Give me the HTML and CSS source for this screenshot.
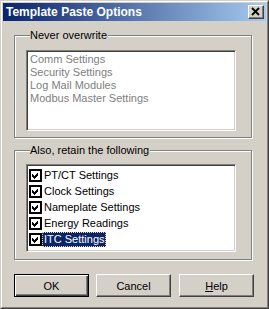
FILE: index.html
```html
<!DOCTYPE html>
<html lang="en">
<head>
    <meta charset="UTF-8">
    <title>Template Paste Options</title>
    <link rel="stylesheet" href="styles.css">
</head>
<body>

    <div class="window">
        <div class="frame">
            <div class="title-bar">
                <span class="title">Template Paste Options</span>
                <div class="close-btn">
                    <svg width="14" height="12" viewBox="0 0 14 12">
                        <path d="M3 2 L10 9 M10 2 L3 9" stroke="#000" stroke-width="1.8"/>
                    </svg>
                </div>
            </div>

            <div class="dialog">
                <fieldset class="group">
                    <legend>Never overwrite</legend>
                    <div class="listbox plain">
                        <div class="item disabled">Comm Settings</div>
                        <div class="item disabled">Security Settings</div>
                        <div class="item disabled">Log Mail Modules</div>
                        <div class="item disabled">Modbus Master Settings</div>
                    </div>
                </fieldset>

                <fieldset class="group second">
                    <legend>Also, retain the following</legend>
                    <div class="listbox checks">
                        <div class="check-item">
                            <svg class="checkbox" width="13" height="13" viewBox="0 0 13 13"><rect x="1" y="1" width="11" height="11" fill="#fff" stroke="#000" stroke-width="2"/><polygon points="3,5 5,7 9,3 9,6 5,10 3,8" fill="#000"/></svg>
                            <span class="label">PT/CT Settings</span>
                        </div>
                        <div class="check-item">
                            <svg class="checkbox" width="13" height="13" viewBox="0 0 13 13"><rect x="1" y="1" width="11" height="11" fill="#fff" stroke="#000" stroke-width="2"/><polygon points="3,5 5,7 9,3 9,6 5,10 3,8" fill="#000"/></svg>
                            <span class="label">Clock Settings</span>
                        </div>
                        <div class="check-item">
                            <svg class="checkbox" width="13" height="13" viewBox="0 0 13 13"><rect x="1" y="1" width="11" height="11" fill="#fff" stroke="#000" stroke-width="2"/><polygon points="3,5 5,7 9,3 9,6 5,10 3,8" fill="#000"/></svg>
                            <span class="label">Nameplate Settings</span>
                        </div>
                        <div class="check-item">
                            <svg class="checkbox" width="13" height="13" viewBox="0 0 13 13"><rect x="1" y="1" width="11" height="11" fill="#fff" stroke="#000" stroke-width="2"/><polygon points="3,5 5,7 9,3 9,6 5,10 3,8" fill="#000"/></svg>
                            <span class="label">Energy Readings</span>
                        </div>
                        <div class="check-item">
                            <svg class="checkbox" width="13" height="13" viewBox="0 0 13 13"><rect x="1" y="1" width="11" height="11" fill="#fff" stroke="#000" stroke-width="2"/><polygon points="3,5 5,7 9,3 9,6 5,10 3,8" fill="#000"/></svg>
                            <span class="label selected">ITC Settings</span>
                        </div>
                    </div>
                </fieldset>

                <div class="buttons">
                    <button class="btn default">OK</button>
                    <button class="btn">Cancel</button>
                    <button class="btn"><u>H</u>elp</button>
                </div>
            </div>
        </div>
    </div>

</body>
</html>
```

FILE: styles.css
```css
body {
    margin: 0;
    font-family: 'Liberation Sans', Arial, sans-serif;
    font-size: 11px;
    background: #d4d0c8;
}

.window {
    width: 269px;
    height: 309px;
    box-sizing: border-box;
    border: 1px solid;
    border-color: #d4d0c8 #404040 #404040 #d4d0c8;
}

.frame {
    height: 100%;
    box-sizing: border-box;
    border: 1px solid;
    border-color: #fff #808080 #808080 #fff;
    padding: 1px;
    background: #d4d0c8;
    display: flex;
    flex-direction: column;
}

.title-bar {
    height: 18px;
    display: flex;
    align-items: center;
    justify-content: space-between;
    padding: 0 2px 0 3px;
    background: linear-gradient(to right, #0a246a, #a6caf0);
}

.title {
    color: #fff;
    font-weight: bold;
    font-size: 12px;
}

.close-btn {
    width: 16px;
    height: 14px;
    box-sizing: border-box;
    border: 1px solid;
    border-color: #fff #404040 #404040 #fff;
    box-shadow: inset -1px -1px 0 #808080;
    background: #d4d0c8;
    display: flex;
}

.dialog {
    padding: 8px 0 0 11px;
}

.group {
    width: 238px;
    box-sizing: border-box;
    margin: 0;
    padding: 8px 0 6px 11px;
    border: 1px solid #808080;
    box-shadow: inset 1px 1px 0 #fff, 1px 1px 0 #fff;
    min-inline-size: 0;
}

.group legend {
    padding: 0 1px 0 0;
    margin-left: 4px;
    line-height: 13px;
    background: #d4d0c8;
    color: #000;
}

.group.second {
    margin-top: 6px;
    padding-top: 7px;
    padding-bottom: 7px;
}

.listbox {
    width: 210px;
    box-sizing: border-box;
    background: #fff;
    border: 1px solid;
    border-color: #808080 #fff #fff #808080;
    box-shadow: inset 1px 1px 0 #404040, inset -1px -1px 0 #d4d0c8;
    padding: 1px;
}

.listbox.plain {
    height: 81px;
    padding-top: 2px;
}

.listbox.checks {
    height: 88px;
    padding-top: 2px;
}

.item {
    line-height: 13px;
    padding-left: 2px;
}

.item.disabled {
    color: #808080;
}

.check-item {
    height: 16px;
    display: flex;
    align-items: center;
}

.checkbox {
    margin-left: 1px;
    shape-rendering: crispEdges;
}

.label {
    height: 15px;
    line-height: 15px;
    padding: 0 1px 0 2px;
    color: #000;
}

.label.selected {
    background: #0a246a;
    color: #fff;
    outline: 1px dotted #f5db95;
    outline-offset: -1px;
}

.buttons {
    display: flex;
    gap: 7px;
    margin-top: 14px;
}

.btn {
    width: 75px;
    height: 23px;
    box-sizing: border-box;
    font-family: 'Liberation Sans', Arial, sans-serif;
    font-size: 11px;
    color: #000;
    background: #d4d0c8;
    border: 1px solid;
    border-color: #fff #404040 #404040 #fff;
    box-shadow: inset -1px -1px 0 #808080, inset 1px 1px 0 #d4d0c8;
    padding: 0;
}

.btn.default {
    border: 1px solid #000;
    box-shadow: inset 1px 1px 0 #fff, inset -1px -1px 0 #404040, inset -2px -2px 0 #808080;
}

.btn:last-child {
    margin-left: 1px;
}
```
